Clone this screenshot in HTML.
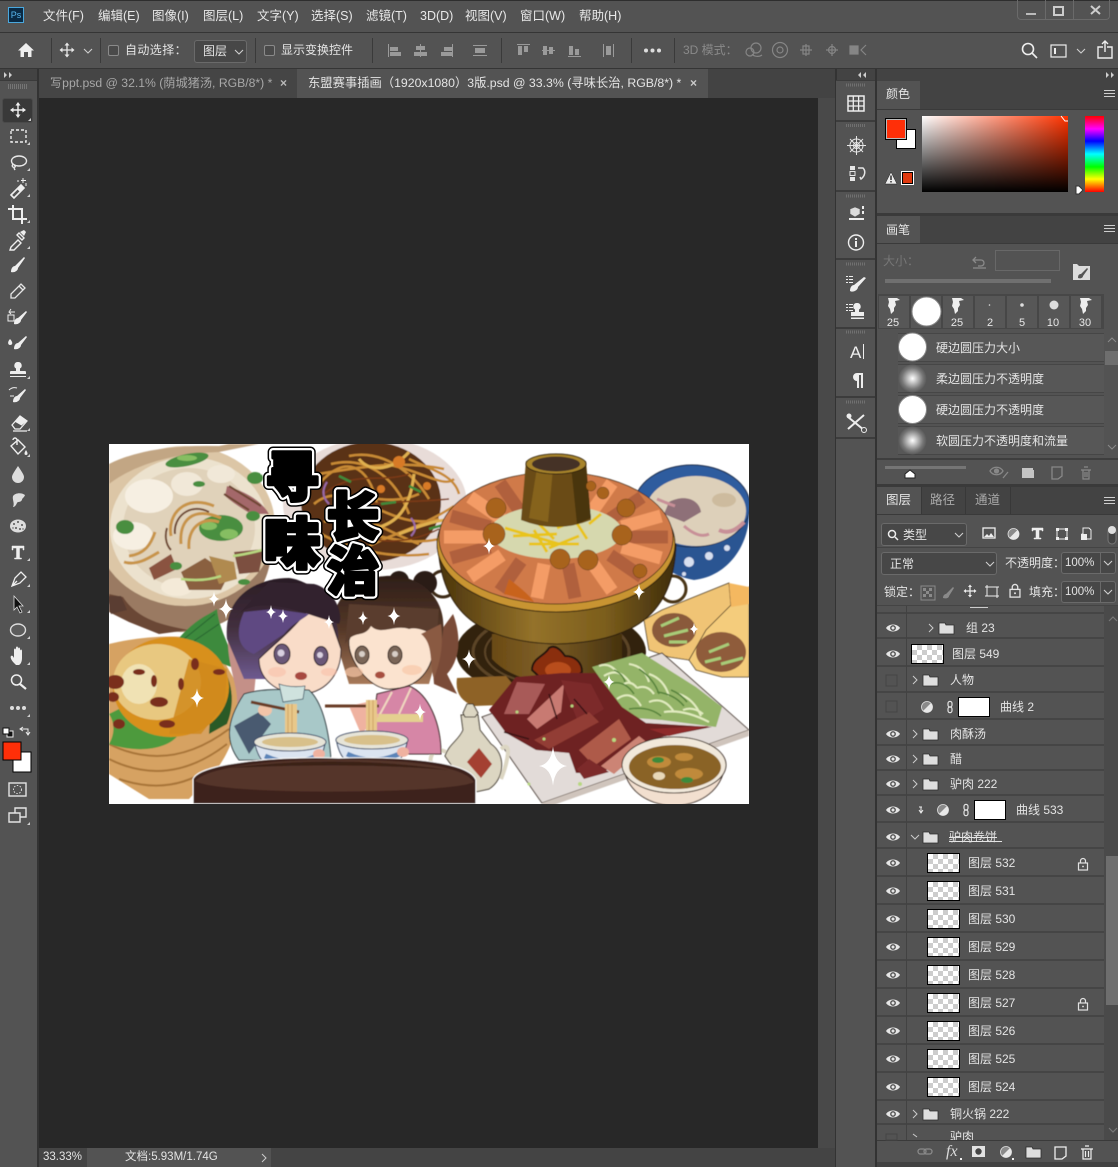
<!DOCTYPE html>
<html><head><meta charset="utf-8">
<style>
html,body{margin:0;padding:0;background:#535353;}
#r{position:relative;width:1118px;height:1167px;overflow:hidden;background:#535353;font-family:"Liberation Sans","Noto Sans CJK SC",sans-serif;font-size:12px;color:#e4e4e4;}
#r div,#r span{position:absolute;box-sizing:border-box;}
.t{white-space:nowrap;line-height:16px;height:16px;}
.m{font-size:12.5px;top:8px;color:#e8e8e8;}
.d{color:#8a8a8a;}
.b{border:1px solid #6a6a6a;border-radius:3px;background:#474747;}
.ln{background:#3c3c3c;}
.rw{left:877px;width:227px;border-bottom:2px solid #454545;background:#535353;}
.th{width:33px;height:20px;border:1px solid #000;background-color:#fff;background-image:conic-gradient(#ccc 25%,#fff 25% 50%,#ccc 50% 75%,#fff 75%);background-size:10px 10px;}
.wh{width:32px;height:20px;border:1px solid #000;background:#fff;}
.sep{width:1px;background:#3a3a3a;top:38px;height:25px;}
.li{left:898px;width:206px;height:29px;background:#575757;border-top:1px solid #464646;border-bottom:1px solid #464646;}
.cell{top:296px;width:30px;height:32px;background:#575757;}
.nm{font-size:11px;color:#e8e8e8;text-align:center;width:30px;top:317px;line-height:12px;}
</style></head><body><div id="r">

<!-- top chrome -->
<div style="left:0;top:0;width:1118px;height:1px;background:#2e2e2e"></div>
<div style="left:0;top:32px;width:1118px;height:1px;background:#353535"></div>
<div style="left:0;top:68px;width:1118px;height:1px;background:#353535"></div>
<div style="left:0;top:69px;width:1118px;height:29px;background:#434343"></div>
<div style="left:1017px;top:0;width:93px;height:20px;border:1px solid #6a6a6a;border-top:0;border-radius:0 0 4px 4px"></div>
<div style="left:1045px;top:0;width:1px;height:20px;background:#6a6a6a"></div>
<div style="left:1073px;top:0;width:1px;height:20px;background:#6a6a6a"></div>

<div style="left:8px;top:7px;width:16px;height:16px;background:#0a2a44;border:1px solid #4aa8de;color:#58b8f0;font-size:9px;line-height:14px;text-align:center">Ps</div>
<span class="t m" style="left:43px">文件(F)</span>
<span class="t m" style="left:98px">编辑(E)</span>
<span class="t m" style="left:152px">图像(I)</span>
<span class="t m" style="left:203px">图层(L)</span>
<span class="t m" style="left:257px">文字(Y)</span>
<span class="t m" style="left:311px">选择(S)</span>
<span class="t m" style="left:366px">滤镜(T)</span>
<span class="t m" style="left:420px">3D(D)</span>
<span class="t m" style="left:465px">视图(V)</span>
<span class="t m" style="left:520px">窗口(W)</span>
<span class="t m" style="left:579px">帮助(H)</span>

<!-- options bar -->
<div class="sep" style="left:51px"></div><div class="sep" style="left:100px"></div><div class="sep" style="left:255px"></div><div class="sep" style="left:372px"></div><div class="sep" style="left:501px"></div><div class="sep" style="left:631px"></div><div class="sep" style="left:674px"></div>
<div style="left:108px;top:45px;width:11px;height:11px;border:1px solid #8a8a8a;border-radius:2px;background:#4a4a4a"></div>
<span class="t" style="left:125px;top:42px;letter-spacing:.4px">自动选择：</span>
<div class="b" style="left:194px;top:40px;width:53px;height:23px"></div>
<span class="t" style="left:203px;top:43px">图层</span>
<div style="left:264px;top:45px;width:11px;height:11px;border:1px solid #8a8a8a;border-radius:2px;background:#4a4a4a"></div>
<span class="t" style="left:281px;top:42px">显示变换控件</span>
<span class="t d" style="left:683px;top:42px">3D 模式：</span>

<!-- left strip / toolbar -->
<div style="left:0;top:80px;width:37px;height:1087px;background:#535353;border-top:1px solid #3a3a3a"></div>
<div style="left:37px;top:69px;width:2px;height:1098px;background:#333"></div>
<div style="left:8px;top:84px;width:20px;height:5px;background:repeating-linear-gradient(90deg,#757575 0 1px,transparent 1px 2px)"></div>
<div style="left:2px;top:98px;width:31px;height:25px;background:#393939;border:1px solid #4a4a4a;border-radius:3px"></div>

<!-- tabs -->
<div style="left:39px;top:69px;width:258px;height:29px;background:#454545"></div>
<div style="left:297px;top:69px;width:411px;height:29px;background:#535353"></div>
<span class="t" style="left:50px;top:75px;color:#a8a8a8;font-size:12.2px">写ppt.psd @ 32.1% (荫城猪汤, RGB/8*) *</span>
<span class="t" style="left:280px;top:75px;color:#bbb;font-weight:bold">×</span>
<span class="t" style="left:308px;top:75px;font-size:12.3px">东盟赛事插画（1920x1080）3版.psd @ 33.3% (寻味长治, RGB/8*) *</span>
<span class="t" style="left:690px;top:75px;font-weight:bold;color:#ccc">×</span>

<!-- canvas -->
<div style="left:39px;top:98px;width:779px;height:1050px;background:#282828"></div>
<div style="left:818px;top:98px;width:17px;height:1050px;background:#494949"></div>
<div style="left:835px;top:69px;width:2px;height:1098px;background:#333"></div>

<!-- status bar -->
<div style="left:39px;top:1148px;width:796px;height:19px;background:#444"></div>
<div style="left:87px;top:1148px;width:184px;height:19px;background:#535353"></div>
<span class="t" style="left:43px;top:1149px;font-size:11.5px">33.33%</span>
<span class="t" style="left:125px;top:1149px;font-size:11.5px">文档:5.93M/1.74G</span>

<!-- right dock -->
<div style="left:836px;top:80px;width:39px;height:1087px;background:#535353"></div>
<div class="ln" style="left:836px;top:80px;width:39px;height:1px"></div>
<div class="ln" style="left:836px;top:120px;width:39px;height:2px"></div>
<div class="ln" style="left:836px;top:190px;width:39px;height:2px"></div>
<div class="ln" style="left:836px;top:258px;width:39px;height:2px"></div>
<div class="ln" style="left:836px;top:327px;width:39px;height:2px"></div>
<div class="ln" style="left:836px;top:396px;width:39px;height:2px"></div>
<div class="ln" style="left:836px;top:437px;width:39px;height:2px"></div>
<div style="left:875px;top:69px;width:2px;height:1098px;background:#333"></div>

<!-- colour panel -->
<div style="left:877px;top:81px;width:241px;height:28px;background:#434343"></div>
<div style="left:877px;top:81px;width:43px;height:29px;background:#535353"></div>
<span class="t" style="left:886px;top:86px">颜色</span>
<div style="left:877px;top:109px;width:241px;height:1px;background:#3a3a3a"></div>
<div style="left:896px;top:129px;width:20px;height:20px;background:#fff;border:1px solid #000"></div>
<div style="left:885px;top:118px;width:22px;height:22px;background:#ff2f08;border:1px solid #000;outline:1px solid #bbb;outline-offset:-2px"></div>
<div style="left:922px;top:116px;width:146px;height:76px;background:linear-gradient(to bottom,rgba(0,0,0,0),#000),linear-gradient(to right,#fff,#ff3300)"></div>
<div style="left:1085px;top:116px;width:19px;height:76px;background:linear-gradient(to bottom,#f00 0,#f0f 17%,#00f 33%,#0ff 50%,#0f0 67%,#ff0 83%,#f00 100%)"></div>
<div style="left:901px;top:171px;width:13px;height:14px;background:#e03a10;border:1px solid #fff;outline:1px solid #000;outline-offset:-2px"></div>

<div style="left:877px;top:213px;width:241px;height:3px;background:#3a3a3a"></div>

<!-- brush panel -->
<div style="left:877px;top:216px;width:241px;height:27px;background:#434343"></div>
<div style="left:877px;top:216px;width:43px;height:28px;background:#535353"></div>
<span class="t" style="left:886px;top:222px;font-size:12px">画笔</span>
<div style="left:877px;top:243px;width:241px;height:1px;background:#3a3a3a"></div>
<span class="t d" style="left:883px;top:253px;color:#777">大小：</span>
<div style="left:995px;top:250px;width:65px;height:21px;border:1px solid #686868;background:#535353"></div>
<div style="left:885px;top:279px;width:166px;height:4px;background:#707070"></div>
<div style="left:878px;top:294px;width:226px;height:35px;background:#474747"></div>
<div class="cell" style="left:879px"></div><div class="cell" style="left:911px"></div><div class="cell" style="left:943px"></div><div class="cell" style="left:975px"></div><div class="cell" style="left:1007px"></div><div class="cell" style="left:1039px"></div><div class="cell" style="left:1071px"></div>
<span class="nm" style="left:878px">25</span><span class="nm" style="left:942px">25</span><span class="nm" style="left:975px">2</span><span class="nm" style="left:1007px">5</span><span class="nm" style="left:1038px">10</span><span class="nm" style="left:1070px">30</span>
<div class="li" style="top:333px"></div><div class="li" style="top:364px"></div><div class="li" style="top:395px"></div><div class="li" style="top:426px"></div>
<span class="t" style="left:936px;top:340px">硬边圆压力大小</span>
<span class="t" style="left:936px;top:371px">柔边圆压力不透明度</span>
<span class="t" style="left:936px;top:402px">硬边圆压力不透明度</span>
<span class="t" style="left:936px;top:433px">软圆压力不透明度和流量</span>
<div style="left:1105px;top:351px;width:13px;height:14px;background:#6e6e6e"></div>
<div style="left:877px;top:458px;width:241px;height:2px;background:#3e3e3e"></div>
<div style="left:885px;top:466px;width:81px;height:3px;background:#757575"></div>
<div style="left:877px;top:484px;width:241px;height:3px;background:#3a3a3a"></div>

<!-- layers panel -->
<div style="left:877px;top:487px;width:241px;height:27px;background:#434343"></div>
<div style="left:877px;top:487px;width:44px;height:28px;background:#535353"></div>
<div style="left:921px;top:487px;width:1px;height:27px;background:#383838"></div>
<div style="left:965px;top:487px;width:1px;height:27px;background:#383838"></div>
<div style="left:1010px;top:487px;width:1px;height:27px;background:#383838"></div>
<span class="t" style="left:886px;top:492px;font-size:12.5px">图层</span>
<span class="t" style="left:930px;top:492px;color:#aaa;font-size:12.5px">路径</span>
<span class="t" style="left:975px;top:492px;color:#aaa;font-size:12.5px">通道</span>
<div style="left:877px;top:514px;width:241px;height:1px;background:#3a3a3a"></div>
<div class="b" style="left:881px;top:523px;width:86px;height:23px"></div>
<span class="t" style="left:903px;top:527px">类型</span>
<div style="left:877px;top:547px;width:241px;height:1px;background:#444"></div>
<div class="b" style="left:881px;top:552px;width:116px;height:23px"></div>
<span class="t" style="left:890px;top:556px">正常</span>
<span class="t" style="left:1005px;top:555px">不透明度：</span>
<div class="b" style="left:1061px;top:552px;width:55px;height:22px"></div>
<div style="left:1100px;top:552px;width:1px;height:22px;background:#6a6a6a"></div>
<span class="t" style="left:1065px;top:555px;font-size:11.5px">100%</span>
<span class="t" style="left:884px;top:584px">锁定：</span>
<span class="t" style="left:1029px;top:584px">填充：</span>
<div class="b" style="left:1061px;top:581px;width:55px;height:22px"></div>
<div style="left:1100px;top:581px;width:1px;height:22px;background:#6a6a6a"></div>
<span class="t" style="left:1065px;top:584px;font-size:11.5px">100%</span>
<div style="left:877px;top:605px;width:241px;height:1px;background:#444"></div>

<!-- layer rows -->
<div class="rw" style="top:606px;height:8px"></div>
<div class="rw" style="top:614px;height:25px"></div>
<div class="rw" style="top:639px;height:28px"></div>
<div class="rw" style="top:667px;height:26px"></div>
<div class="rw" style="top:693px;height:27px"></div>
<div class="rw" style="top:720px;height:26px"></div>
<div class="rw" style="top:746px;height:25px"></div>
<div class="rw" style="top:771px;height:25px"></div>
<div class="rw" style="top:796px;height:27px"></div>
<div class="rw" style="top:823px;height:26px"></div>
<div class="rw" style="top:849px;height:28px"></div>
<div class="rw" style="top:877px;height:28px"></div>
<div class="rw" style="top:905px;height:28px"></div>
<div class="rw" style="top:933px;height:28px"></div>
<div class="rw" style="top:961px;height:28px"></div>
<div class="rw" style="top:989px;height:28px"></div>
<div class="rw" style="top:1017px;height:28px"></div>
<div class="rw" style="top:1045px;height:28px"></div>
<div class="rw" style="top:1073px;height:28px"></div>
<div class="rw" style="top:1101px;height:24px"></div>
<div class="rw" style="top:1125px;height:15px;border:0;overflow:hidden"><span class="t" style="left:73px;top:4px">驴肉</span></div>
<div style="left:906px;top:606px;width:1px;height:534px;background:#424242"></div>
<div style="left:1104px;top:606px;width:14px;height:534px;background:#4a4a4a"></div>
<div style="left:1106px;top:856px;width:12px;height:149px;background:#6e6e6e"></div>

<span class="t" style="left:966px;top:620px">组 23</span>
<div class="th" style="left:911px;top:644px"></div>
<span class="t" style="left:952px;top:646px">图层 549</span>
<span class="t" style="left:950px;top:672px">人物</span>
<div class="wh" style="left:958px;top:697px"></div>
<span class="t" style="left:1000px;top:699px">曲线 2</span>
<span class="t" style="left:950px;top:726px">肉酥汤</span>
<span class="t" style="left:950px;top:751px">醋</span>
<span class="t" style="left:950px;top:776px">驴肉 222</span>
<div class="wh" style="left:974px;top:800px"></div>
<span class="t" style="left:1016px;top:802px">曲线 533</span>
<span class="t" style="left:949px;top:829px;text-decoration:line-through">驴肉卷饼</span>
<div style="left:949px;top:841px;width:53px;height:1px;background:#e4e4e4"></div>

<div class="th" style="left:927px;top:853px"></div><span class="t" style="left:968px;top:855px">图层 532</span>
<div class="th" style="left:927px;top:881px"></div><span class="t" style="left:968px;top:883px">图层 531</span>
<div class="th" style="left:927px;top:909px"></div><span class="t" style="left:968px;top:911px">图层 530</span>
<div class="th" style="left:927px;top:937px"></div><span class="t" style="left:968px;top:939px">图层 529</span>
<div class="th" style="left:927px;top:965px"></div><span class="t" style="left:968px;top:967px">图层 528</span>
<div class="th" style="left:927px;top:993px"></div><span class="t" style="left:968px;top:995px">图层 527</span>
<div class="th" style="left:927px;top:1021px"></div><span class="t" style="left:968px;top:1023px">图层 526</span>
<div class="th" style="left:927px;top:1049px"></div><span class="t" style="left:968px;top:1051px">图层 525</span>
<div class="th" style="left:927px;top:1077px"></div><span class="t" style="left:968px;top:1079px">图层 524</span>
<span class="t" style="left:950px;top:1106px">铜火锅 222</span>
<div style="left:877px;top:1140px;width:241px;height:1px;background:#3a3a3a"></div>
<div style="left:877px;top:1162px;width:241px;height:5px;background:#424242"></div>
<span class="t" style="left:946px;top:1144px;font-family:'Liberation Serif',serif;font-style:italic;font-size:16px;color:#ddd">fx</span>

<!-- chrome icons -->
<svg style="position:absolute;left:0;top:0" width="1118" height="1167" viewBox="0 0 1118 1167">
<defs>
<g id="eye"><path d="M-7 0C-4-4.6 4-4.6 7 0C4 4.6-4 4.6-7 0Z" fill="#e6e6e6"/><circle r="2.9" fill="#535353"/><circle r="1.5" fill="#e6e6e6"/></g>
<g id="fol"><path d="M0 1V12H15V3H7L6 1Z" fill="#dedede" stroke="#2e2e2e" stroke-width=".8"/></g>
<path id="chv" d="M0-4L4 0L0 4" fill="none" stroke="#ccc" stroke-width="1"/>
<path id="dn" d="M-4-2L0 2L4-2" fill="none" stroke="#cfcfcf" stroke-width="1.1"/>
<g id="lk" fill="none" stroke="#e2e2e2" stroke-width="1.2"><rect x="-4.5" y="-1" width="9" height="7" fill="#535353"/><path d="M-2.5-1V-3A2.5 2.5 0 0 1 2.5-3V-1"/><circle cy="2.5" r=".9" fill="#e2e2e2" stroke="none"/></g>
<path id="cr" d="M0 0L-3 0L0-3Z" fill="#cfcfcf"/>
<g id="adj"><circle r="5.5" fill="#8a8a8a" stroke="#e2e2e2" stroke-width=".8"/><path d="M3.9-3.9A5.5 5.5 0 0 1-3.9 3.9Z" fill="#e8e8e8"/></g>
<g id="lnk" fill="none" stroke="#e2e2e2" stroke-width="1.5"><rect x="-2.5" y="-7" width="5" height="7" rx="2.5"/><rect x="-2.5" y="0" width="5" height="7" rx="2.5"/></g>
<path id="splat" d="M-5-10L4-10L7-8L2-7L3-3L1 0L1 3L-2 6L-3 1L-5-2L-4-6Z" fill="#eee"/>
<radialGradient id="sf"><stop offset="0" stop-color="#fff"/><stop offset=".75" stop-color="#777"/><stop offset="1" stop-color="#5a5a5a"/></radialGradient>
</defs>

<!-- window ctl -->
<rect x="1026" y="13" width="10" height="2" fill="#bbb"/>
<rect x="1054" y="7" width="9" height="8" fill="none" stroke="#ccc" stroke-width="2"/>
<path d="M1091 6L1100 14M1100 6L1091 14" stroke="#ccc" stroke-width="2"/>

<!-- option bar icons -->
<path d="M26 43L18 50.5H20.5V57H24V52H28V57H31.5V50.5H34Z" fill="#eee"/>
<g transform="translate(67,50)" fill="none" stroke="#e8e8e8" stroke-width="1.3"><path d="M-6 0H6M0-6V6"/><path d="M-2.5-4.5L0-7.5L2.5-4.5ZM-2.5 4.5L0 7.5L2.5 4.5ZM-4.5-2.5L-7.5 0L-4.5 2.5ZM4.5-2.5L7.5 0L4.5 2.5Z" fill="#e8e8e8" stroke="none"/></g>
<use href="#dn" x="88" y="51"/><use href="#dn" x="239" y="52"/>
<g fill="#9a9a9a">
<path d="M388 44h1v13h-1zM390 47h8v4h-8zM390 52h11v4h-11z"/>
<path d="M420 44h1v13h-1zM416 46h9v4h-9zM414 52h13v4h-13z"/>
<path d="M452 44h1v13h-1zM444 47h8v4h-8zM441 52h11v4h-11z"/>
<path d="M473 45h14v1h-14zM473 55h14v1h-14zM475 48h10v5h-10z"/>
<path d="M517 44h13v1h-13zM518 46h4v9h-4zM524 46h4v6h-4z"/>
<path d="M542 50h13v1h-13zM543 46h4v9h-4zM549 47h4v7h-4z"/>
<path d="M568 56h13v1h-13zM569 46h4v9h-4zM575 49h4v6h-4z"/>
<path d="M603 44h1v13h-1zM613 44h1v13h-1zM606 46h5v9h-5z"/>
</g>
<circle cx="646" cy="50.5" r="2" fill="#ddd"/><circle cx="652.5" cy="50.5" r="2" fill="#ddd"/><circle cx="659" cy="50.5" r="2" fill="#ddd"/>
<g fill="none" stroke="#858585" stroke-width="1.2">
<circle cx="756" cy="48" r="5"/><circle cx="750" cy="52" r="4"/><path d="M752 54a6 4 0 0 0 10 1"/>
<circle cx="780" cy="50" r="7.5"/><circle cx="780" cy="50" r="3"/>
<path d="M806 44v12M800 50h12M803 46h6v8h-6z"/><path d="M826 50h12M832 44v12"/><circle cx="832" cy="50" r="3.5"/>
<rect x="850" y="46" width="8" height="8" fill="#858585"/><path d="M866 45l-5 5 5 5"/>
</g>
<g fill="none" stroke="#eee" stroke-width="1.6">
<circle cx="1028" cy="49" r="5.5"/><path d="M1032 53L1037 58"/>
<rect x="1051" y="45" width="15" height="12" stroke-width="1.2"/>
<path d="M1103 47H1098V58H1112V47H1107M1105 52V41M1102 44L1105 41L1108 44" stroke-width="1.4"/>
</g>
<rect x="1054" y="48" width="2" height="6" fill="#eee"/>
<use href="#dn" x="1081" y="51"/>

<!-- collapse arrows -->
<g fill="#cfcfcf"><path d="M4 72l3 3-3 3zM9 72l3 3-3 3z"/><path d="M866 72l-3 3 3 3zM861 72l-3 3 3 3z"/><path d="M1106 72l3 3-3 3zM1111 72l3 3-3 3z"/></g>
<g stroke="#cfcfcf"><path d="M1104 90.5h11M1104 93.5h11M1104 96.5h11M1104 225.5h11M1104 228.5h11M1104 231.5h11M1104 497.5h11M1104 500.5h11M1104 503.5h11"/></g>
<path d="M262 1154l4 4-4 4" fill="none" stroke="#ccc"/>

<!-- tool icons -->
<g transform="translate(18,110)" fill="none" stroke="#f0f0f0" stroke-width="1.4"><path d="M-6 0H6M0-6V6"/><path d="M-2.5-4.5L0-8L2.5-4.5ZM-2.5 4.5L0 8L2.5 4.5ZM-4.5-2.5L-8 0L-4.5 2.5ZM4.5-2.5L8 0L4.5 2.5Z" fill="#f0f0f0" stroke="none"/></g>
<rect x="11" y="130" width="15" height="12" fill="none" stroke="#eee" stroke-width="1.4" stroke-dasharray="3 2"/>
<g fill="none" stroke="#e8e8e8" stroke-width="1.4"><ellipse cx="19" cy="161" rx="7.5" ry="5"/><path d="M13 164c-2 3 1 4 2 3c1-1-1-2-1-2M14 168l1 2"/></g>
<g><path d="M11 195L21 185L24 188L14 198Z" fill="none" stroke="#eee" stroke-width="1.6"/><path d="M17 189L21 185L24 188L20 192Z" fill="#eee"/><path d="M23 178v5M21 180.5h5M26 183v3M18 180v2" stroke="#eee"/></g>
<path d="M8 209H22V221M13 205V219H27M22 221V224" fill="none" stroke="#eee" stroke-width="2"/>
<path d="M11 247L18 240L21 243L14 250L10 250ZM19 233l5 5-2 2-5-5Z" fill="none" stroke="#eee" stroke-width="1.4"/><path d="M20 232l4-2 2 2-2 4z" fill="#eee"/>
<path d="M11 272C11 268 13 266 15 266L24 257L25 258L18 268C18 271 14 273 11 272Z" fill="#eee"/>
<path d="M11 298V294L21 284L25 288L15 298ZM19 286l4 4" fill="none" stroke="#e6e6e6" stroke-width="1.3"/>
<path d="M14 324C14 320 16 318 18 318L26 311L27 312L21 320C21 323 17 325 14 324Z" fill="#eee"/><rect x="8" y="315" width="6" height="6" fill="none" stroke="#eee"/><path d="M10 312h5M11 309l-2 3 2 2" fill="none" stroke="#eee"/>
<path d="M14 349C14 345 16 343 18 343L26 336L27 337L21 345C21 348 17 350 14 349Z" fill="#eee"/><path d="M10 339c-3 3-2 6 0 6c3 0 3-3 0-6Z" fill="#eee"/>
<path d="M18 362a3.5 3.5 0 0 1 2 6.5V371H25a1 1 0 0 1 1 1V374H10V372a1 1 0 0 1 1-1H16V368.5A3.5 3.5 0 0 1 18 362ZM10 376H26V377H10Z" fill="#eee"/>
<path d="M13 402C13 398 15 396 17 396L25 389L26 390L20 398C20 401 16 403 13 402Z" fill="#eee"/><path d="M10 396h4M9 390a8 8 0 0 1 8-2" fill="none" stroke="#eee"/>
<path d="M12 425L20 416L27 421L20 429H15ZM15 421L22 425M13 431H27" fill="none" stroke="#eee" stroke-width="1.3"/><path d="M20 416L27 421L22 425L15 421Z" fill="#eee"/>
<path d="M11 446L18 440L25 447L18 454ZM13 440a2 2 0 0 1 4 0v5" fill="none" stroke="#eee" stroke-width="1.4"/><path d="M26 450c-2 3-2 5 0 5s2-2 0-5Z" fill="#eee"/>
<path d="M18 466C14 472 12 475 12 477a6 6 0 0 0 12 0C24 475 22 472 18 466Z" fill="#ddd"/>
<path d="M13 507C15 503 12 500 13 496C15 493 21 492 25 495C24 498 22 498 22 500C20 503 18 501 17 503C16 505 15 507 13 507Z" fill="#ddd"/>
<ellipse cx="18" cy="526" rx="8" ry="6.5" fill="#ddd"/><g fill="#555"><circle cx="14" cy="524" r="1"/><circle cx="18" cy="522" r="1"/><circle cx="22" cy="525" r="1"/><circle cx="16" cy="528" r="1"/><circle cx="20" cy="529" r="1"/><circle cx="13" cy="528" r=".7"/><circle cx="23" cy="529" r=".7"/></g>
<path d="M12 546H24V550H23V548H19.5V558H21.5V559H14.5V558H16.5V548H13V550H12Z" fill="#eee" stroke="#eee" stroke-width=".5"/>
<path d="M12 586L15 578L21 572L26 577L20 583ZM12 586L17 581" fill="none" stroke="#eee" stroke-width="1.3"/>
<path d="M14 596V610L17 607L20 613L22 612L19 606H23Z" fill="#111" stroke="#ddd" stroke-width=".8"/>
<ellipse cx="18" cy="630" rx="7.5" ry="6" fill="#5c5c5c" stroke="#ddd" stroke-width="1.4"/>
<path d="M14 663C11 660 10 657 11 656C12 655 13 656 14 658V650C14 648 16 648 16 650V654V648C16 646 18 646 18 648V654V649C18 647 20 647 20 649V655V651C20 649 22 649 22 651V658C22 661 21 664 19 665H16Z" fill="#eee"/>
<circle cx="16.5" cy="680" r="5" fill="none" stroke="#eee" stroke-width="1.5"/><path d="M20 684L26 689" stroke="#eee" stroke-width="2.2"/>
<circle cx="12" cy="708" r="2" fill="#ddd"/><circle cx="18" cy="708" r="2" fill="#ddd"/><circle cx="24" cy="708" r="2" fill="#ddd"/>
<rect x="7" y="731" width="6" height="6" fill="#111" stroke="#eee"/><rect x="3" y="728" width="6" height="6" fill="#fff" stroke="#111"/>
<path d="M21 729h4l3 0v5M23 727l-3 2 3 2M26 732l2 3 2-3" fill="none" stroke="#eee"/>
<rect x="13" y="752" width="18" height="20" fill="#fff" stroke="#000"/>
<rect x="3" y="742" width="18" height="18" fill="#ff2f08" stroke="#000"/>
<rect x="9" y="783" width="17" height="13" fill="none" stroke="#e4e4e4" stroke-width="1.4"/><circle cx="17.5" cy="789.5" r="4" fill="none" stroke="#ddd" stroke-dasharray="1.5 1.5"/>
<path d="M15 813V808H26V817H20M9 813H20V822H9Z" fill="none" stroke="#e4e4e4" stroke-width="1.4"/>
<g><use href="#cr" x="31" y="121"/><use href="#cr" x="30" y="145"/><use href="#cr" x="30" y="171"/><use href="#cr" x="30" y="197"/><use href="#cr" x="30" y="223"/><use href="#cr" x="30" y="249"/><use href="#cr" x="30" y="379"/><use href="#cr" x="30" y="431"/><use href="#cr" x="30" y="457"/><use href="#cr" x="30" y="561"/><use href="#cr" x="30" y="587"/><use href="#cr" x="30" y="613"/><use href="#cr" x="30" y="639"/><use href="#cr" x="30" y="665"/><use href="#cr" x="30" y="717"/><use href="#cr" x="30" y="825"/></g>

<!-- dock grips -->
<g stroke="#707070"><path d="M846 85h20M846 196h20M846 264h20M846 332h20M846 402h20" stroke-width="3" stroke-dasharray="1 1"/><path d="M846 125.5h20" stroke-width="3" stroke-dasharray="1 1"/></g>
<!-- dock icons -->
<g fill="none" stroke="#eee" stroke-width="1.3"><rect x="848" y="96" width="16" height="15" stroke-width="1.5"/><path d="M853.3 96v15M858.6 96v15M848 101h16M848 106h16"/></g>
<g fill="none" stroke="#e6e6e6" stroke-width="1"><circle cx="856.5" cy="145.5" r="6.5"/><circle cx="856.5" cy="145.5" r="3"/><path d="M847 145.5h19M856.5 136v19M850 139l13 13M863 139l-13 13"/></g>
<g fill="#e6e6e6"><rect x="850" y="166" width="5" height="4"/><rect x="850" y="171.5" width="5" height="4" fill="none" stroke="#e6e6e6"/><rect x="850" y="177" width="5" height="4"/></g><path d="M858 168h5c3 3 2 8-2 11l-1-2" fill="none" stroke="#e6e6e6" stroke-width="1.5"/>
<path d="M850 209l5-2 5 2v5l-5 3-5-3z" fill="#dcdcdc" stroke="#555" stroke-width=".6"/><rect x="849" y="218" width="15" height="2" fill="#eee"/><rect x="862" y="206" width="2" height="3" fill="#eee"/><rect x="862" y="211" width="2" height="3" fill="#eee"/>
<circle cx="856" cy="242.5" r="7.5" fill="none" stroke="#eee" stroke-width="1.4"/><rect x="855" y="241" width="2" height="6" fill="#eee"/><rect x="855" y="238" width="2" height="2" fill="#eee"/>
<g fill="#eee"><path d="M846 276h2v1h-2zM849 276h4v1h-4zM846 279h2v1h-2zM849 279h4v1h-4zM846 282h2v1h-2zM849 282h4v1h-4z"/><path d="M850 291C850 287 852 285 854 285L864 277L866 278L858 287C858 290 853 293 850 291Z"/>
<path d="M846 304h2v1h-2zM849 304h4v1h-4zM846 307h2v1h-2zM849 307h4v1h-4zM846 310h2v1h-2zM849 310h4v1h-4z"/><path d="M857 303a3.5 3.5 0 0 1 2 6.5V312H864V316H851V312H855V309.5A3.5 3.5 0 0 1 857 303ZM851 317.5H864V319H851Z"/></g>
<text x="850" y="358" font-family="Liberation Sans" font-size="17" fill="#eee">A</text><rect x="863" y="344" width="1" height="15" fill="#eee"/>
<path d="M857 373H863V388H861V375H859V388H857V381A4 4 0 0 1 857 373Z" fill="#eee"/>
<g fill="none" stroke="#eee" stroke-width="2"><path d="M848 429L864 415M848 417L864 430"/></g><circle cx="849" cy="416" r="2.5" fill="#eee"/><circle cx="864" cy="430" r="2.5" fill="#535353" stroke="#eee"/>

<!-- colour details -->
<path d="M1061 116l4 5h3" fill="none" stroke="#fff"/>
<path d="M1076 186h3l4 4-4 4h-3z" fill="#fff" stroke="#333"/>
<path d="M891 172L885 184H897Z" fill="#eee" stroke="#222" stroke-width=".5"/><rect x="890.3" y="175.5" width="1.4" height="4.5" fill="#222"/><rect x="890.3" y="181" width="1.4" height="1.5" fill="#222"/>

<!-- brush panel icons -->
<path d="M976 257l-3 3 3 3M974 260h7a3 3 0 0 1 0 6h-3M973 268h13" fill="none" stroke="#8a8a8a" stroke-width="1.3"/>
<path d="M1073 264h4l2 2h11v14h-17z" fill="#dcdcdc"/><path d="M1078 278c0-3 1-4 3-4l6-6 1 1-5 7c0 2-3 3-5 2z" fill="#555"/>
<g><use href="#splat" x="893" y="308"/><use href="#splat" x="957" y="308"/><use href="#splat" x="1085" y="308"/><circle cx="926.5" cy="311.5" r="14.5" fill="#fff" stroke="#888"/><circle cx="989.5" cy="305" r=".8" fill="#ddd"/><circle cx="1022" cy="305" r="1.8" fill="#ddd"/><circle cx="1054" cy="305" r="4.5" fill="#ddd"/></g>
<g><circle cx="912.5" cy="347" r="14" fill="#fff" stroke="#8a8a8a"/><circle cx="912.5" cy="378.5" r="14" fill="url(#sf)"/><circle cx="912.5" cy="409.5" r="14" fill="#fff" stroke="#8a8a8a"/><circle cx="912.5" cy="440.5" r="14" fill="url(#sf)"/></g>
<path d="M1108 342l4-4 4 4M1108 445l4 4 4-4" fill="none" stroke="#8a8a8a"/>
<path d="M905 478V474L910 470L915 474V478Z" fill="#fff" stroke="#222"/>
<g fill="none" stroke="#888" stroke-width="1.3"><path d="M990 471c3-5 10-5 13 0c-3 5-10 5-13 0Z"/><circle cx="996.5" cy="471" r="2" fill="#888"/><path d="M1003 478l5-6"/></g>
<path d="M1022 468h11v2h1v8h-12z" fill="#c4c4c4"/><path d="M1052 467H1062V476L1058 479H1052Z" fill="none" stroke="#888" stroke-width="1.3"/><path d="M1081 470h10M1083 470v9h6v-9M1084 467h4M1085 472v5M1087 472v5" fill="none" stroke="#888" stroke-width="1.2"/>

<!-- layer filter icons -->
<g><circle cx="892" cy="534" r="3.5" fill="none" stroke="#eee" stroke-width="1.5"/><path d="M895 537l3 3" stroke="#eee" stroke-width="1.5"/>
<use href="#dn" x="959" y="535"/><use href="#dn" x="990" y="564"/><use href="#dn" x="1108" y="563"/><use href="#dn" x="1108" y="592"/>
<rect x="983" y="528" width="12" height="10" fill="none" stroke="#eee" stroke-width="1.3"/><path d="M984 537l3-3 2 2 2-3 3 4z" fill="#eee"/>
<use href="#adj" x="1013.5" y="534"/>
<path d="M1032 528H1043V531H1042V530H1039V538H1041V539H1034V538H1036V530H1033V531H1032Z" fill="#eee" stroke="#eee" stroke-width=".5"/>
<rect x="1057" y="529" width="10" height="10" fill="none" stroke="#eee"/><g fill="#eee"><rect x="1056" y="528" width="3" height="3"/><rect x="1065" y="528" width="3" height="3"/><rect x="1056" y="537" width="3" height="3"/><rect x="1065" y="537" width="3" height="3"/></g>
<path d="M1083 528h6l2 2v9h-6v-3h-3v-2h1z" fill="none" stroke="#eee"/><rect x="1081" y="534" width="6" height="6" fill="#eee"/>
<rect x="1108" y="527" width="8" height="17" rx="4" fill="#444" stroke="#777"/><circle cx="1112" cy="530" r="4" fill="#ddd"/>
<g fill="#8a8a8a"><path d="M921 586h14v14h-14z" fill="none" stroke="#8a8a8a"/><path d="M923 588h3v3h-3zM929 588h3v3h-3zM926 591h3v3h-3zM923 594h3v3h-3zM929 594h3v3h-3z"/></g>
<path d="M943 598c0-3 2-4 3-4l7-7 1 1-5 8c0 2-3 3-6 2z" fill="#8a8a8a"/>
<g transform="translate(970,591)" fill="none" stroke="#eee" stroke-width="1.2"><path d="M-5 0H5M0-5V5"/><path d="M-2-4L0-6.5L2-4ZM-2 4L0 6.5L2 4ZM-4-2L-6.5 0L-4 2ZM4-2L6.5 0L4 2Z" fill="#eee" stroke="none"/></g>
<path d="M987 587h10v9h-10zM985 587h2M997 587h2M987 585v2M997 596v2M985 596h2M997 596h2" fill="none" stroke="#eee"/>
<use href="#lk" transform="translate(1015,590.5) scale(1.1)"/></g>

<!-- layer list icons -->
<g>
<use href="#eye" x="893" y="628"/><use href="#eye" x="893" y="654"/>
<rect x="886" y="675" width="11" height="11" fill="none" stroke="#444"/><rect x="886" y="701" width="11" height="11" fill="none" stroke="#444"/>
<use href="#eye" x="893" y="734"/><use href="#eye" x="893" y="759"/><use href="#eye" x="893" y="784"/><use href="#eye" x="893" y="810"/><use href="#eye" x="893" y="837"/>
<use href="#eye" x="893" y="863"/><use href="#eye" x="893" y="891"/><use href="#eye" x="893" y="919"/><use href="#eye" x="893" y="947"/><use href="#eye" x="893" y="975"/><use href="#eye" x="893" y="1003"/><use href="#eye" x="893" y="1031"/><use href="#eye" x="893" y="1059"/><use href="#eye" x="893" y="1087"/><use href="#eye" x="893" y="1114"/>
<rect x="886" y="1134" width="11" height="6" fill="none" stroke="#444"/>
<use href="#chv" x="929" y="628"/><use href="#chv" x="913" y="680"/><use href="#chv" x="913" y="734"/><use href="#chv" x="913" y="759"/><use href="#chv" x="913" y="784"/><use href="#chv" x="913" y="1114"/>
<path d="M911 835l4 4 4-4" fill="none" stroke="#ccc"/><path d="M913 1134l4 3" fill="none" stroke="#ccc"/>
<use href="#fol" x="939" y="622"/><use href="#fol" x="923" y="674"/><use href="#fol" x="923" y="728"/><use href="#fol" x="923" y="753"/><use href="#fol" x="923" y="778"/><use href="#fol" x="923" y="831"/><use href="#fol" x="923" y="1108"/>
<use href="#adj" x="927" y="707"/><use href="#adj" x="943" y="810"/>
<use href="#lnk" transform="translate(950,707) scale(.8)"/><use href="#lnk" transform="translate(966,810) scale(.8)"/>
<path d="M921 807v5M919 810l2 3 2-3" fill="none" stroke="#eee"/><path d="M919 807h3" stroke="#eee"/>
<use href="#lk" x="1083" y="864"/><use href="#lk" x="1083" y="1004"/>
<path d="M1109 621l4-4 4 4M1109 1128l4 4 4-4" fill="none" stroke="#777" stroke-width="1.2"/>
<rect x="970" y="607" width="18" height="1" fill="#ccc"/>
<!-- footer -->
<g fill="none" stroke="#8a8a8a" stroke-width="1.3"><rect x="918" y="1149" width="8" height="5" rx="2.5"/><rect x="924" y="1149" width="8" height="5" rx="2.5"/></g>
<rect x="972" y="1146" width="13" height="11" fill="#e2e2e2"/><circle cx="978.5" cy="1151.5" r="3.2" fill="#444"/>
<use href="#adj" x="1006" y="1152"/>
<use href="#fol" x="1026" y="1146"/>
<path d="M1055 1147H1066V1156L1062 1159H1055Z" fill="none" stroke="#eee" stroke-width="1.3"/>
<path d="M1081 1149h12M1083 1149v10h8v-10M1085 1146h4M1085.5 1151v6M1088.5 1151v6" fill="none" stroke="#eee" stroke-width="1.2"/>
<rect x="960" y="1158" width="2" height="2" fill="#eee"/><rect x="1012" y="1158" width="2" height="2" fill="#eee"/>
</g>
</svg>

<!-- Illustration -->
<svg style="position:absolute;left:109px;top:444px" width="640" height="360" viewBox="0 0 640 360" font-family="'Noto Sans CJK SC',sans-serif">
<defs>
<linearGradient id="gh1" x1="0" y1="0" x2="0" y2="1"><stop offset="0" stop-color="#2a1c24"/><stop offset=".5" stop-color="#43303f"/><stop offset="1" stop-color="#6e5a90"/></linearGradient>
<linearGradient id="gh2" x1="0" y1="0" x2="0" y2="1"><stop offset="0" stop-color="#2e1e18"/><stop offset=".5" stop-color="#553828"/><stop offset="1" stop-color="#a87a5a"/></linearGradient>
<linearGradient id="gb" x1="0" y1="0" x2="1" y2="0"><stop offset="0" stop-color="#4a340c"/><stop offset=".4" stop-color="#94722a"/><stop offset=".7" stop-color="#7c5e1c"/><stop offset="1" stop-color="#3e2c0c"/></linearGradient>
<linearGradient id="gc" x1="0" y1="0" x2="1" y2="0"><stop offset="0" stop-color="#6a4a14"/><stop offset=".4" stop-color="#7f6028"/><stop offset="1" stop-color="#46320e"/></linearGradient>
<clipPath id="meatclip"><ellipse cx="447" cy="94" rx="117" ry="66"/></clipPath>
<path id="sp" d="M0-7Q.7-.7 5 0Q.7 .7 0 7Q-.7 .7-5 0Q-.7-.7 0-7Z" fill="#fff"/>
<filter id="soft" x="0" y="0" width="100%" height="100%"><feGaussianBlur stdDeviation=".45"/></filter>
</defs>
<rect width="640" height="360" fill="#fff"/>
<g filter="url(#soft)">
<!-- noodle plate -->
<ellipse cx="266" cy="60" rx="92" ry="66" fill="#e8dcd8"/>
<ellipse cx="262" cy="58" rx="70" ry="60" fill="#5a3014"/>
<g fill="none" stroke="#c88a34" stroke-width="2.5">
<path d="M210 40C235 10 260 20 268 60M222 20C255 12 285 30 300 70M240 12C275 5 305 30 320 55M205 60C240 30 280 90 330 75M215 78C245 60 270 85 310 100M230 95C260 80 285 105 330 95M255 105C280 90 310 85 345 62M275 20C310 25 335 45 345 35M225 55C250 45 275 65 310 50M300 15C320 25 345 30 350 50M210 30C240 25 290 15 335 25M212 90C240 105 280 115 320 110"/>
<path d="M265 85C280 80 300 75 305 30M290 90C315 80 330 75 350 75M250 15C262 30 285 25 300 8" stroke="#e0b050" stroke-width="3"/></g>
<g fill="none" stroke="#7c3a14" stroke-width="1.5"><path d="M215 50C245 25 270 40 300 30M220 70C250 55 290 60 340 55M245 90C270 100 300 100 330 85"/></g>
<path d="M230 32l12 6M272 60l15-2M300 42l12 6M320 85l14-4" stroke="#3f8a3a" stroke-width="2.5"/>
<circle cx="290" cy="18" r="6" fill="#d87a28"/><circle cx="272" cy="45" r="4" fill="#d87a28"/><circle cx="318" cy="42" r="4" fill="#d87a28"/>
<path d="M218 38q-8 12 2 22M302 92q8-8 0-18" fill="none" stroke="#9a6aa8" stroke-width="2"/>

<!-- clay pot -->
<ellipse cx="72" cy="106" rx="90" ry="82" fill="#9a7a62"/>
<path d="M0 150L14 153C30 178 60 182 80 186L50 190L20 178L0 168Z" fill="#6a4636"/>
<path d="M-2 152H12L18 166L2 170Z" fill="#5a3c30"/>
<ellipse cx="76" cy="82" rx="90" ry="80" fill="#dcc6a6"/>
<path d="M0 20Q40 0 110 2L120 0H150L110 8Q40 10 0 40Z" fill="#c2a684"/>
<ellipse cx="80" cy="84" rx="79" ry="71" fill="#ece2ce"/>
<ellipse cx="80" cy="84" rx="66" ry="60" fill="#e0d2ba"/>
<!-- clams -->
<ellipse cx="40" cy="52" rx="24" ry="17" fill="#f6efe2"/><ellipse cx="24" cy="92" rx="20" ry="14" fill="#f6efe2"/><ellipse cx="78" cy="40" rx="16" ry="12" fill="#f1e8d8"/><ellipse cx="112" cy="30" rx="14" ry="9" fill="#f1e8d8"/><ellipse cx="68" cy="143" rx="16" ry="9" fill="#f4ead8"/>
<!-- meat -->
<path d="M118 42Q150 52 160 70L142 70Q125 60 116 52Z" fill="#a4686a"/>
<path d="M72 128L96 114L120 130L112 146L80 146Z" fill="#8a6040"/><path d="M100 112L125 118L128 135L110 140Z" fill="#b08a50"/>
<path d="M40 124L62 110L68 125L45 136Z" fill="#8a5240"/><path d="M125 108L155 105L150 128L130 130Z" fill="#7c5040"/>
<path d="M72 135Q95 138 112 132M124 112Q140 110 160 104" stroke="#b8d880" stroke-width="2.5" fill="none"/>
<!-- cilantro -->
<g fill="#4a8e40"><ellipse cx="78" cy="16" rx="22" ry="6" transform="rotate(-12 78 16)"/><ellipse cx="112" cy="84" rx="22" ry="13"/><ellipse cx="16" cy="83" rx="9" ry="7"/><ellipse cx="146" cy="34" rx="8" ry="6"/><ellipse cx="144" cy="72" rx="7" ry="5"/><ellipse cx="67" cy="122" rx="6" ry="4"/><ellipse cx="135" cy="138" rx="6" ry="3"/><ellipse cx="90" cy="40" rx="6" ry="3"/></g>
<g fill="#86be62"><ellipse cx="120" cy="90" rx="9" ry="5"/><ellipse cx="100" cy="82" rx="8" ry="4"/><ellipse cx="78" cy="14" rx="10" ry="3"/></g>
<!-- noodles -->
<g fill="none" stroke="#c89448" stroke-width="3"><path d="M62 92C58 70 76 50 105 62M72 100C70 76 84 62 112 74M50 108C40 114 28 122 15 118M46 88C42 100 36 110 20 112M80 105C78 85 92 72 110 78"/></g>
<g fill="none" stroke="#6e4630" stroke-width="2"><path d="M66 90C64 74 80 58 100 68M58 84C56 90 56 100 62 106M120 42L152 62M115 50L140 66"/></g>

<!-- steamer -->
<path d="M0 200C40 190 90 190 105 200L128 240C130 280 125 300 110 322L80 355H40L0 330Z" fill="#d6a262"/>
<path d="M0 300Q60 330 120 285M0 315Q60 345 118 300M10 335Q60 352 100 325" fill="none" stroke="#a87438" stroke-width="2"/>
<!-- leaf + cake -->
<path d="M65 200C85 175 98 172 108 165C110 185 120 200 128 225L100 215Z" fill="#3e8a3e"/>
<path d="M75 195L106 170M85 197L110 180" stroke="#2a6a30" stroke-width="1.2"/>
<path d="M0 270C10 285 0 300 0 300C30 310 60 305 70 290L20 260Z" fill="#4e9a3e"/>
<path d="M105 210C122 230 128 255 118 280L100 290Z" fill="#2a5a28"/>
<ellipse cx="62" cy="243" rx="58" ry="50" fill="#d8901e"/>
<ellipse cx="48" cy="238" rx="44" ry="38" fill="#e8c880"/>
<ellipse cx="30" cy="240" rx="18" ry="20" fill="#f0e2b4"/>
<path d="M80 215L118 225L116 260L92 290L60 290Z" fill="#d08a1c" opacity=".85"/>
<g fill="#7a2e1e"><ellipse cx="50" cy="258" rx="9" ry="5"/><ellipse cx="72" cy="240" rx="3" ry="6"/><ellipse cx="86" cy="220" rx="4" ry="6"/><ellipse cx="45" cy="237" rx="3" ry="6"/><ellipse cx="6" cy="238" rx="9" ry="7"/><ellipse cx="4" cy="253" rx="6" ry="5"/><ellipse cx="30" cy="228" rx="6" ry="3"/><ellipse cx="10" cy="280" rx="6" ry="5"/><ellipse cx="58" cy="280" rx="8" ry="4"/><ellipse cx="110" cy="228" rx="6" ry="3"/></g>

<!-- blue bowl -->
<path d="M525 62C530 100 550 130 585 136C620 132 640 100 640 70L640 60Z" fill="#2c5592"/>
<ellipse cx="583" cy="62" rx="58" ry="41" fill="#2f5c9e" stroke="#1c2a45"/>
<ellipse cx="587" cy="67" rx="50" ry="35" fill="#ddd0ba"/>
<path d="M560 58C575 50 590 55 592 68L575 78L555 70Z" fill="#8e7078"/>
<path d="M610 86Q622 92 635 78" stroke="#c89098" stroke-width="4" fill="none"/><path d="M575 82Q590 95 600 90M548 55Q560 60 566 62" stroke="#c89098" stroke-width="3" fill="none"/>
<ellipse cx="615" cy="56" rx="12" ry="7" fill="#cdbb9e"/>
<g fill="#d8e0f0"><circle cx="555" cy="120" r="4"/><circle cx="580" cy="118" r="5"/><circle cx="600" cy="112" r="4"/><circle cx="618" cy="104" r="3"/><circle cx="575" cy="130" r="2"/></g>

<!-- wraps -->
<path d="M535 176L553 166L620 139L622 163L597 209L580 216L560 213L540 206Z" fill="#f0c474" stroke="#3a2a1a" stroke-width=".8"/>
<path d="M580 216L597 186L620 163L640 143V233H613L587 226Z" fill="#f4cc7c" stroke="#3a2a1a" stroke-width=".8"/>
<ellipse cx="565" cy="186" rx="22" ry="17" fill="#8a5a3a"/><ellipse cx="612" cy="208" rx="25" ry="20" fill="#8f5c3a"/>
<path d="M552 182l18-8M555 192l24-6M560 198l18 0M600 208l20-8M596 218l16-4M612 220l22-6" stroke="#a8cc78" stroke-width="3"/>
<path d="M620 139L640 143V160L622 163Z" fill="#f4b860"/>

<!-- stand -->
<ellipse cx="442" cy="208" rx="95" ry="46" fill="#33230f"/>
<ellipse cx="442" cy="208" rx="78" ry="38" fill="none" stroke="#5c4428" stroke-width="3"/>
<ellipse cx="442" cy="208" rx="66" ry="32" fill="none" stroke="#5c4428" stroke-width="2"/>
<path d="M348 234L397 232L420 260L365 262Q345 255 348 234Z" fill="#8e6226"/>
<path d="M383 190H513V215Q480 240 445 238Q405 238 383 215Z" fill="url(#gc)"/>
<path d="M423 226C423 214 436 212 440 204C446 200 452 206 456 212C466 212 473 218 473 228L460 238H436Z" fill="#8a2e10" stroke="#241408" stroke-width="2"/>
<ellipse cx="449" cy="226" rx="13" ry="8" fill="#b84e1a"/>
<!-- handles -->
<circle cx="334" cy="140" r="13" fill="none" stroke="#3e2a14" stroke-width="3"/><circle cx="564" cy="145" r="13" fill="none" stroke="#4a3418" stroke-width="3"/>
<!-- bowl -->
<path d="M329 100C332 170 372 198 448 200C525 198 565 170 567 100Z" fill="url(#gb)" stroke="#2c1e0c"/>
<ellipse cx="447" cy="100" rx="119" ry="68" fill="#c89430" stroke="#2c1e0c"/>
<ellipse cx="447" cy="94" rx="117" ry="66" fill="#d07a4a" stroke="#2c1e0c" stroke-width=".8"/>
<g clip-path="url(#meatclip)" fill="none" stroke-width="13">
<path stroke="#b0603e" d="M517 93L559 93M501 111L533 133M459 120L466 154M412 117L391 147M381 103L342 114M381 83L342 72M412 69L391 39M459 66L466 32M501 75L533 53"/>
<path stroke="#f49c66" d="M513 103L552 114M482 117L503 147M435 120L428 154M393 111L361 133M377 93L335 93M393 75L361 53M435 66L428 32M482 69L503 39M513 83L552 72"/>
</g>
<path d="M400 135Q420 150 425 158L395 150Z" fill="#c8641e"/>
<!-- center -->
<ellipse cx="447" cy="88" rx="66" ry="27" fill="#d6d8ae"/>
<g stroke="#e8c41e" stroke-width="3"><path d="M396 84L450 100M404 92L448 90M425 86L438 108M440 104L470 92M462 70L478 95M430 80L445 95M448 84L476 72M480 80L492 70M420 100L470 100"/></g>
<!-- chimney -->
<path d="M417 17L477 17L482 76Q447 90 412 76Z" fill="#6a4c16"/>
<path d="M428 24L444 24L439 78L420 74Z" fill="#86641e"/><path d="M462 22L477 22L482 74L468 80Z" fill="#4a340c"/>
<ellipse cx="447" cy="20" rx="30" ry="10" fill="#a8842c" stroke="#2c1e0c"/>
<ellipse cx="447" cy="20" rx="24" ry="7.5" fill="#443228"/>
<g fill="#a8641e" stroke="#5a3410" stroke-width=".5"><circle cx="387" cy="64" r="10"/><circle cx="385" cy="90" r="11"/><circle cx="517" cy="64" r="9"/><circle cx="513" cy="91" r="10"/><circle cx="451" cy="115" r="10"/><circle cx="479" cy="116" r="10"/><circle cx="494" cy="49" r="6"/><circle cx="531" cy="127" r="7"/><circle cx="482" cy="42" r="5"/></g>

<!-- plate -->
<path d="M373 273L433 359L640 286L553 209Z" fill="#e2dbd8" stroke="#4a3a30"/>
<path d="M433 359L640 286V292L436 364Z" fill="#cfc4bc"/>
<!-- cucumber -->
<path d="M483 223L533 209L587 243L613 263L607 283L553 276L513 273L497 243Z" fill="#94b468"/>
<g fill="none" stroke="#e2ecc0" stroke-width="2"><path d="M495 232Q510 222 522 240M520 220Q535 222 540 238M540 230Q555 235 560 252M508 255Q522 245 532 262M540 258Q555 252 565 268M570 250Q585 255 592 272M555 268Q575 265 600 278M490 222Q500 218 508 228M528 244Q538 240 545 250M515 240Q522 236 528 244M574 266Q584 262 594 270"/></g>
<g fill="none" stroke="#55823a" stroke-width="1.5"><path d="M500 240Q515 235 525 250M530 225Q545 235 550 250M548 248Q565 250 575 262M520 265Q540 262 552 272M505 226Q514 230 516 238M562 246Q572 250 578 258"/></g>
<!-- meat -->
<path d="M380 266L407 233L453 229L487 229L513 263L537 279L603 283L553 293L513 316L493 329L467 329L460 309L427 306L397 289Z" fill="#6e2224"/>
<path d="M395 270L408 238L436 240L420 270Z" fill="#a85a58"/><path d="M418 275L455 240L452 268L428 285Z" fill="#c87a72"/>
<path d="M452 236L482 240L495 265L470 280Z" fill="#7c2a2c"/><path d="M425 296L480 268L490 278L440 305Z" fill="#923c34"/>
<path d="M470 306L510 275L522 295L485 322Z" fill="#ae5a48"/><path d="M492 322L530 292L540 300L505 330Z" fill="#cc8474"/>
<path d="M468 325L480 315L500 328L475 335Z" fill="#7c2a2c"/><path d="M540 285L600 282L560 292Z" fill="#8e2a2a"/>
<path d="M395 288L420 295M440 250L448 275M465 255L478 270" stroke="#3a1214" stroke-width="1.5"/>
<g fill="#b8d880"><circle cx="408" cy="268" r="1.5"/><circle cx="435" cy="295" r="1.5"/><circle cx="505" cy="296" r="2"/><circle cx="463" cy="262" r="1.5"/><circle cx="471" cy="340" r="2"/><circle cx="420" cy="340" r="1.5"/></g>
<!-- sauce bowl -->
<path d="M514 322C518 345 535 360 565 362C595 360 612 345 616 322Z" fill="#f2dfcf" stroke="#3a2a20"/>
<ellipse cx="565" cy="321" rx="52" ry="28" fill="#f1e8da" stroke="#3a2a20"/>
<ellipse cx="566" cy="323" rx="46" ry="22" fill="#8a6428"/>
<g fill="#c08a3a"><ellipse cx="550" cy="318" rx="12" ry="6"/><ellipse cx="580" cy="330" rx="14" ry="6"/><ellipse cx="575" cy="313" rx="9" ry="4"/></g><ellipse cx="550" cy="332" rx="6" ry="4" fill="#e8d8b8"/>
<g fill="#3e8a3a"><ellipse cx="549" cy="316" rx="6" ry="3"/><ellipse cx="578" cy="336" rx="6" ry="3"/></g>

<!-- vinegar bottle -->
<path d="M352 271H369L371 286L382 300C397 310 396 335 380 345L362 349L345 325L336 312C340 300 350 296 354 286Z" fill="#dcd6c2" stroke="#3a3024"/>
<path d="M358 260h6l5 9-3 4h-10l-2-4z" fill="#dcd6c2" stroke="#3a3024"/>
<path d="M337 308C325 302 320 312 322 320L335 322M392 305C404 295 398 320 392 335" fill="none" stroke="#dcd6c2" stroke-width="4"/>
<path d="M370 304L383 320L372 334L358 318Z" fill="#a44030"/>

<!-- chibi 2 (right) -->
<path d="M344 170C352 190 352 215 338 230L348 250L325 240L322 200Z" fill="#7a4c38"/>
<circle cx="316" cy="139" r="12" fill="#2c1c18"/><circle cx="290" cy="137" r="10" fill="#2c1c18"/>
<path d="M225 190C218 150 255 130 285 132C320 134 345 165 330 205L320 240H240Z" fill="url(#gh2)"/>
<path d="M240 196C238 215 260 245 280 245C310 245 325 225 325 198C320 180 300 178 280 180C260 180 245 180 240 196Z" fill="#fbe3cf" stroke="#2a1a14" stroke-width="1"/>
<path d="M236 200C245 185 255 195 262 182C272 192 285 180 300 185C310 182 320 190 328 190L330 165L240 160Z" fill="#5a3c2e"/>
<path d="M312 190C325 200 320 220 325 235C330 220 335 205 332 180Z" fill="#8a5a42"/>
<ellipse cx="253" cy="211" rx="7" ry="9" fill="#7a6658" stroke="#2a1a14"/><ellipse cx="286" cy="211" rx="7" ry="9" fill="#7a6658" stroke="#2a1a14"/><circle cx="253" cy="210" r="3" fill="#d8cfc8"/><circle cx="286" cy="210" r="3" fill="#d8cfc8"/>
<ellipse cx="245" cy="228" rx="9" ry="5" fill="#f8c8a8" opacity=".7"/><ellipse cx="303" cy="226" rx="10" ry="5" fill="#f8c8a8" opacity=".7"/>
<ellipse cx="271" cy="231" rx="5" ry="3.5" fill="#a85040"/>
<path d="M268 250L300 242C320 250 332 280 332 310H260Z" fill="#d686a6" stroke="#2a1a14" stroke-width="1"/>
<path d="M283 248L270 272M302 244L290 270" stroke="#f0d8c0" stroke-width="2"/>
<rect x="268" y="270" width="46" height="8" fill="#e4d090"/>
<path d="M240 262L258 258L270 272L252 290Z" fill="#efb2a0"/>
<path d="M216 262H270" stroke="#6a3e28" stroke-width="3"/>

<!-- chibi 1 (left) -->
<path d="M122 175C112 210 130 240 128 260L145 250L150 200Z" fill="#c49088"/>
<path d="M118 195C114 150 150 134 180 134C210 138 235 170 228 205L215 235H135Z" fill="url(#gh1)"/>
<path d="M150 215C150 240 175 250 190 250C215 250 232 232 232 205L218 165L200 165C180 190 165 200 150 215Z" fill="#f9dcc8" stroke="#2a1a24"/>
<path d="M125 175C140 155 170 160 205 172L230 180C235 170 225 145 205 140L160 138Z" fill="#33242e"/>
<path d="M135 168C125 190 130 205 145 210L175 190C185 178 195 175 200 170L165 165Z" fill="#5e4a82"/>
<ellipse cx="173" cy="210" rx="8" ry="10" fill="#6a5878" stroke="#1a1018"/><ellipse cx="212" cy="212" rx="7" ry="9.5" fill="#6a5878" stroke="#1a1018"/><circle cx="172" cy="209" r="3.5" fill="#d8d0e0"/><circle cx="211" cy="211" r="3" fill="#d8d0e0"/>
<ellipse cx="168" cy="228" rx="9" ry="5" fill="#f8c0a8" opacity=".6"/><ellipse cx="220" cy="228" rx="8" ry="4" fill="#f8c0a8" opacity=".6"/>
<ellipse cx="192" cy="232" rx="6" ry="4" fill="#a84a40"/>
<path d="M135 250C150 245 170 245 200 246C215 260 220 290 222 316H130C118 300 115 280 135 250Z" fill="#a8c8c8" stroke="#1e2a30"/>
<path d="M125 282L150 268L162 280L140 310Z" fill="#4a5a70"/>
<ellipse cx="156" cy="266" rx="7" ry="6" fill="#f2c4a8"/>
<path d="M142 258L190 268" stroke="#6a3e28" stroke-width="3"/>
<path d="M170 240Q182 244 196 242L194 255L174 258Z" fill="#cfe2de" stroke="#3a5060" stroke-width=".8"/>

<!-- noodles -->
<rect x="176" y="260" width="12" height="38" fill="#e8c88a"/><rect x="257" y="256" width="11" height="40" fill="#e8c88a"/>
<path d="M179 260v38M183 260v38M260 256v40M264 256v40" stroke="#c89a5a" stroke-width=".8"/>
<!-- bowls -->
<path d="M146 300C150 320 165 331 182 331C200 331 212 320 216 300Z" fill="#dbe4f0" stroke="#2a3a58"/>
<ellipse cx="181" cy="298" rx="36" ry="9" fill="#e6e4d8" stroke="#3a4a68"/><ellipse cx="181" cy="298" rx="28" ry="5" fill="#d8c08a"/>
<path d="M156 312Q182 324 208 312" stroke="#5a84b8" stroke-width="5" fill="none"/>
<path d="M228 299C232 318 246 328 264 328C282 328 294 318 298 299Z" fill="#dbe4f0" stroke="#2a3a58"/>
<ellipse cx="263" cy="296" rx="36" ry="9" fill="#e6e4d8" stroke="#3a4a68"/><ellipse cx="263" cy="296" rx="28" ry="5" fill="#d8c08a"/>
<path d="M238 310Q264 322 290 310" stroke="#5a84b8" stroke-width="5" fill="none"/>
<ellipse cx="210" cy="310" rx="6" ry="5" fill="#efb2a0"/><ellipse cx="294" cy="308" rx="6" ry="5" fill="#efb2a0"/>

<!-- table -->
<path d="M84 360V335C90 320 160 312 230 314C300 312 360 318 367 336L367 360Z" fill="#3c201c" stroke="#fff" stroke-width="1"/>
<path d="M86 337C100 322 170 315 230 316C300 315 355 322 365 338C345 350 110 352 86 337Z" fill="#553429"/>
<path d="M120 324Q230 310 340 326Q250 318 120 324Z" fill="#3a2018"/>
</g>
<!-- sparkles -->
<use href="#sp" transform="translate(152,22) scale(1.4)"/><use href="#sp" transform="translate(105,155) scale(1.1)"/><use href="#sp" transform="translate(117,165) scale(1.5)"/>
<use href="#sp" transform="translate(88,254) scale(1.4)"/><use href="#sp" transform="translate(162,168)"/><use href="#sp" transform="translate(174,172)"/><use href="#sp" transform="translate(220,178)"/><use href="#sp" transform="translate(285,172) scale(1.3)"/><use href="#sp" transform="translate(254,174)"/><use href="#sp" transform="translate(311,268) scale(1.2)"/>
<use href="#sp" transform="translate(380,102) scale(1.2)"/><use href="#sp" transform="translate(530,148) scale(1.2)"/><use href="#sp" transform="translate(360,215) scale(1.4)"/><use href="#sp" transform="translate(444,322) scale(2.8)"/><use href="#sp" transform="translate(585,185) scale(.9)"/><use href="#sp" transform="translate(500,238) scale(1.1)"/>

<!-- title -->
<g font-weight="900" text-anchor="middle">
<g fill="#000" stroke="#000" stroke-width="11" stroke-linejoin="round"><text x="183" y="52" font-size="54">寻</text><text x="183" y="120" font-size="56">味</text><text x="244" y="92" font-size="52">长</text><text x="244" y="146" font-size="52">治</text></g>
<g fill="#fff" stroke="#fff" stroke-width="8" stroke-linejoin="round"><text x="183" y="52" font-size="54">寻</text><text x="183" y="120" font-size="56">味</text><text x="244" y="92" font-size="52">长</text><text x="244" y="146" font-size="52">治</text></g>
<g fill="#000" stroke="#000" stroke-width="3.5" stroke-linejoin="round"><text x="183" y="52" font-size="54">寻</text><text x="183" y="120" font-size="56">味</text><text x="244" y="92" font-size="52">长</text><text x="244" y="146" font-size="52">治</text></g>
</g>
</svg>

</div></body></html>
